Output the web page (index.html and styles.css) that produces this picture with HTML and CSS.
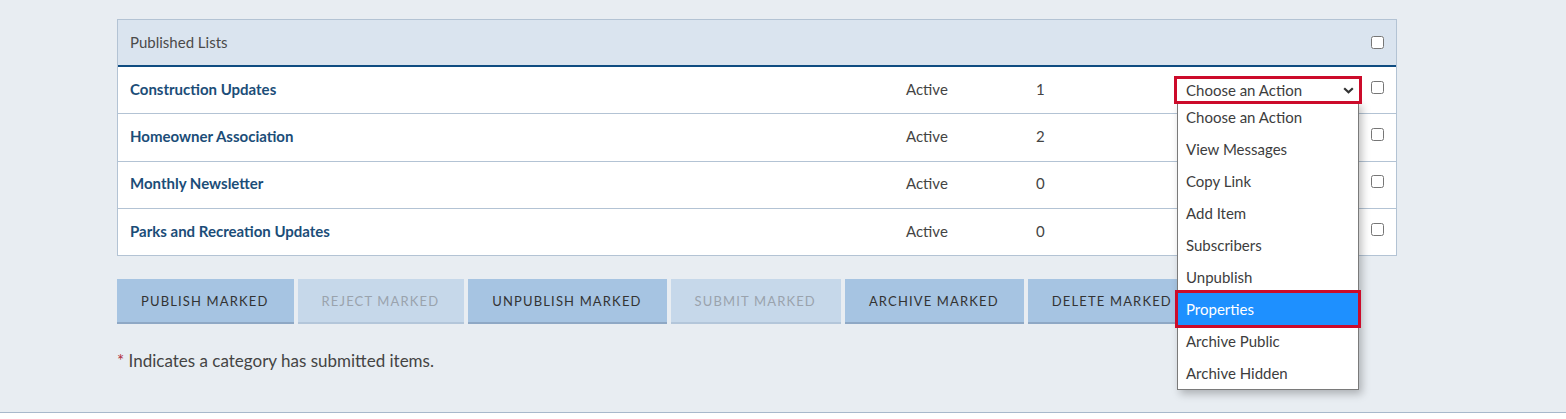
FILE: index.html
```html
<!DOCTYPE html>
<html lang="en">
<head>
<meta charset="utf-8">
<title>Published Lists</title>
<link rel="stylesheet" href="styles.css">
</head>
<body>
<div class="page">
  <div class="lists">
    <div class="lists-head">
      <span class="head-title">Published Lists</span>
      <span class="check-cell"><input type="checkbox" class="cb"></span>
    </div>
    <div class="row">
      <a class="name" href="#">Construction Updates</a>
      <span class="status">Active</span>
      <span class="count">1</span>
      <span class="action">
        <span class="select">Choose an Action
          <svg class="chev" width="11" height="7" viewBox="0 0 11 7"><path d="M1.2 1.2 L5.5 5.3 L9.8 1.2" fill="none" stroke="#333" stroke-width="2.2"/></svg>
        </span>
        <ul class="menu">
          <li>Choose an Action</li>
          <li>View Messages</li>
          <li>Copy Link</li>
          <li>Add Item</li>
          <li>Subscribers</li>
          <li>Unpublish</li>
          <li class="selected">Properties</li>
          <li>Archive Public</li>
          <li>Archive Hidden</li>
        </ul>
      </span>
      <span class="check-cell"><input type="checkbox" class="cb"></span>
    </div>
    <div class="row">
      <a class="name" href="#">Homeowner Association</a>
      <span class="status">Active</span>
      <span class="count">2</span>
      <span class="action"></span>
      <span class="check-cell"><input type="checkbox" class="cb"></span>
    </div>
    <div class="row">
      <a class="name" href="#">Monthly Newsletter</a>
      <span class="status">Active</span>
      <span class="count">0</span>
      <span class="action"></span>
      <span class="check-cell"><input type="checkbox" class="cb"></span>
    </div>
    <div class="row last">
      <a class="name" href="#">Parks and Recreation Updates</a>
      <span class="status">Active</span>
      <span class="count">0</span>
      <span class="action"></span>
      <span class="check-cell"><input type="checkbox" class="cb"></span>
    </div>
  </div>

  <div class="buttons">
    <button class="btn">Publish Marked</button>
    <button class="btn disabled">Reject Marked</button>
    <button class="btn">Unpublish Marked</button>
    <button class="btn disabled">Submit Marked</button>
    <button class="btn">Archive Marked</button>
    <button class="btn">Delete Marked</button>
  </div>

  <p class="note"><span class="star">*</span> Indicates a category has submitted items.</p>
</div>
</body>
</html>
```

FILE: styles.css
```css
html, body {
  margin: 0;
  padding: 0;
  background: #ffffff;
}

body {
  font-family: "Lato", "Noto Sans", "Liberation Sans", sans-serif;
  font-size: 15px;
  color: #444444;
}

.page {
  height: 393px;
  background: #e8edf2;
  border-bottom: 1px solid #a8b8cb;
  padding: 19px 0 0 117px;
}

.lists {
  width: 1278px;
  border: 1px solid #b3c3d4;
  background: #ffffff;
}

.lists-head {
  height: 45px;
  background: #dae4ef;
  border-bottom: 2px solid #0f4c81;
  display: flex;
  align-items: center;
  padding-left: 12px;
}

.head-title {
  flex: 1;
  color: #4a4a4a;
  padding-bottom: 2px;
}

.row {
  height: 46.33px;
  border-bottom: 1px solid #b3c3d4;
  display: grid;
  grid-template-columns: 776px 130px 142px 197px 33px;
  align-items: center;
}

.row.last {
  border-bottom: none;
}

.name {
  padding-left: 12px;
  padding-bottom: 3px;
  font-weight: 700;
  color: #1b4d78;
  text-decoration: none;
}

.status,
.count {
  padding-left: 12px;
  padding-bottom: 3px;
  color: #444444;
}

.action {
  position: relative;
  height: 100%;
}

.check-cell {
  width: 33px;
  display: flex;
  align-items: center;
  justify-content: flex-start;
}

.cb {
  margin: 0 0 0 8px;
  width: 13px;
  height: 13px;
}

.row .check-cell .cb {
  margin-top: -6px;
}

.select {
  position: absolute;
  z-index: 3;
  left: 11px;
  top: 12px;
  width: 182px;
  height: 22px;
  box-sizing: border-box;
  padding-left: 9px;
  background: #ffffff;
  outline: 3px solid #cc0b2a;
  display: flex;
  align-items: center;
  color: #3d3d3d;
  line-height: 22px;
}

.chev {
  position: absolute;
  right: 5px;
  top: 8px;
}

.menu {
  position: absolute;
  z-index: 2;
  left: 11px;
  top: 34px;
  width: 182px;
  margin: 0;
  padding: 0;
  list-style: none;
  background: #ffffff;
  border: 1px solid #7a7a7a;
  border-top: none;
  box-sizing: border-box;
  box-shadow: 3px 4px 8px rgba(0, 0, 0, 0.25);
}

.menu li {
  height: 32px;
  line-height: 32px;
  padding-left: 8px;
  color: #3d3d3d;
}

.menu li.selected {
  background: #1e90ff;
  color: #ffffff;
  outline: 3px solid #cc0b2a;
  outline-offset: 0;
  position: relative;
  z-index: 1;
}

.buttons {
  margin-top: 23px;
  display: flex;
  gap: 4px;
}

.btn {
  font-family: inherit;
  height: 45px;
  padding: 0 25px 0 24px;
  border: none;
  border-bottom: 2px solid #8ea8c5;
  background: #a6c4e2;
  color: #333333;
  font-size: 13px;
  letter-spacing: 1.15px;
  text-transform: uppercase;
}

.btn.disabled {
  background: #c6d8ea;
  border-bottom-color: #b3c6da;
  color: #9aa3ad;
}

.note {
  margin: 26px 0 0 0;
  line-height: 22px;
  font-size: 17px;
  color: #444444;
}

.star {
  color: #b03040;
}
```
